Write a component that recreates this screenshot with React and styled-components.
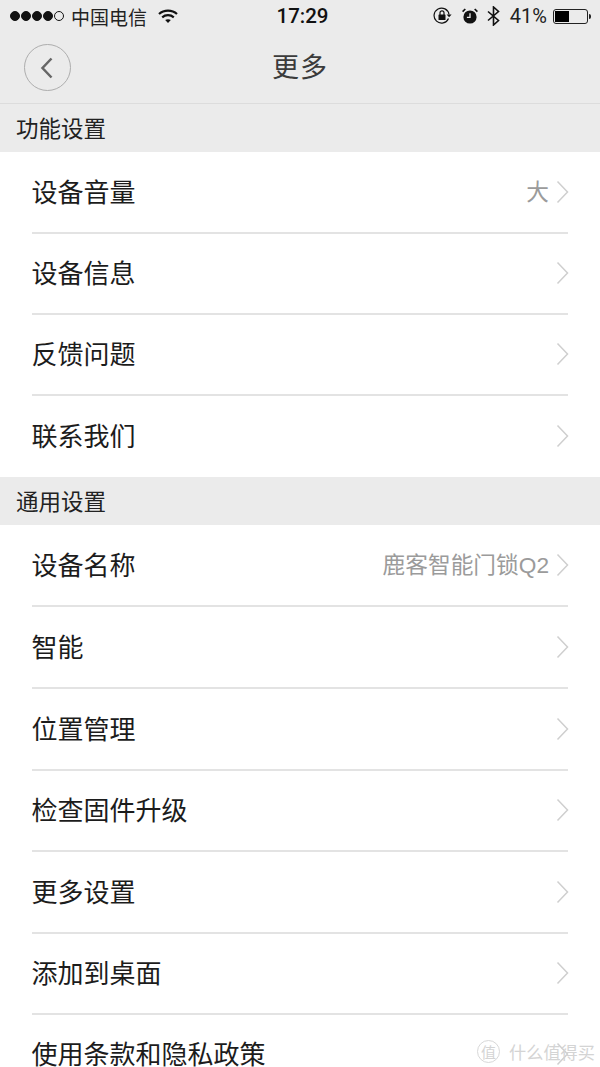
import React from "react";
import styled, { createGlobalStyle } from "styled-components";

const Global = createGlobalStyle`
  html, body { margin: 0; padding: 0; background: #fff; }
  body { font-family: "Liberation Sans", "Noto Sans CJK SC", sans-serif; }
`;
const Page = styled.div`
  position: relative; width: 600px; height: 1067px; overflow: hidden; background: #fff;
  font-family: "Liberation Sans", "Noto Sans CJK SC", sans-serif;
`;
const Header = styled.header`
  height: 103px; background: #ebebeb; border-bottom: 1px solid #dcdcdc; display: flex; flex-direction: column;
`;
const StatusBar = styled.div`
  height: 33px; padding: 0 9px 1px 10px; box-sizing: border-box; display: flex; align-items: center; justify-content: space-between;
  color: #111; font-size: 18px; position: relative;
`;
const StatusGroup = styled.div`
  display: flex; align-items: center; gap: ${p => p.$gap || 0}px;
`;
const Dots = styled.div`display: flex; gap: 1px; margin-right: 7px;`;
const Dot = styled.span`
  width: 10px; height: 10px; border-radius: 50%; box-sizing: border-box;
  background: ${p => (p.$empty ? "transparent" : "#111")};
  border: 1px solid #111;
`;
const Carrier = styled.span`font-size: 19px; margin-right: 11px; color: #222;`;
const Time = styled.span`
  position: absolute; left: 5px; right: 0; top: 4px; text-align: center; font-size: 20.5px; font-weight: 500; pointer-events: none;
  font-family: "Roboto", sans-serif;
`;
const Percent = styled.span`font-size: 20px; font-family: "Roboto", sans-serif; color: #222; margin: 0 -3px 0 1px;`;
const Battery = styled.div`
  position: relative; width: 35px; height: 15px; border: 1px solid #222; border-radius: 3px; box-sizing: border-box; padding: 1px;
  margin-right: 3px;
  &::after { content: ""; position: absolute; right: -4px; top: 4px; width: 2px; height: 5px; background: #222; border-radius: 0 2px 2px 0; }
`;
const BatteryFill = styled.div`height: 100%; background: #000;`;
const NavBar = styled.div`
  flex: 1; position: relative; display: flex; align-items: center; justify-content: center; padding-bottom: 6px;
`;
const BackButton = styled.button`
  position: absolute; left: 24px; top: 11px; width: 47px; height: 47px; border-radius: 50%; border: 1px solid #adadad;
  background: transparent; padding: 0 2px 0 0; display: flex; align-items: center; justify-content: center;
`;
const Title = styled.h1`
  margin: 0; font-size: 27px; font-weight: 400; color: #3b3b3b; letter-spacing: 1px;
`;
const SectionHead = styled.div`
  height: 48px; background: #ebebeb; display: flex; align-items: center; padding: 0 0 3px 16px;
  font-size: 22.5px; color: #222; box-sizing: border-box;
`;
const List = styled.div`display: flex; flex-direction: column;`;
const Row = styled.div`
  height: ${p => p.$h}px; margin: 0 32px; box-sizing: border-box; display: flex; align-items: center; justify-content: space-between;
  border-bottom: ${p => (p.$last ? "none" : "2px solid #e3e3e3")};
`;
const Label = styled.span`font-size: 26px; line-height: 26px; color: #1c1c1c; margin: 1px 0 0 -0.5px;`;
const Right = styled.div`display: flex; align-items: center; gap: 7px; margin: -1px -1px 0 0;`;
const Value = styled.span`font-size: 22.7px; color: #9b9b9b; margin-top: -3px;`;
const Watermark = styled.div`
  position: absolute; left: 477px; top: 1039px; display: flex; align-items: center; gap: 9px;
  color: #d4d4d4; font-size: 17.2px;
`;
const Seal = styled.span`
  width: 23px; height: 23px; border-radius: 50%; border: 1px solid #d8d8d8; box-sizing: border-box; display: flex; align-items: center; justify-content: center;
  font-size: 15px; background: #fff;
`;

const Chevron = () => (
  <svg width="13" height="24" viewBox="0 0 13 24" fill="none">
    <path d="M1.5 1.5 L11.5 12 L1.5 22.5" stroke="#cfcfcf" strokeWidth="1.5" />
  </svg>
);
const Wifi = () => (
  <svg width="20" height="15" viewBox="0 0 20 15" fill="none" stroke="#111" strokeWidth="2.2">
    <path d="M1 5 C6 0.5 14 0.5 19 5" />
    <path d="M4.2 8.3 C7.5 5.5 12.5 5.5 15.8 8.3" />
    <path d="M10 14 L7.2 11.1 C8.8 9.8 11.2 9.8 12.8 11.1 Z" fill="#111" stroke="none" />
  </svg>
);
const RotationLock = () => (
  <svg width="20" height="18" viewBox="0 0 20 18" fill="none">
    <path d="M15.5 11.5 A7.5 7.5 0 1 1 16 7.5" stroke="#111" strokeWidth="1.2" />
    <path d="M13.6 7.5 H18.6 L16.1 10.3 Z" fill="#111" />
    <rect x="5.5" y="7.5" width="7" height="5.5" rx="0.6" fill="#111" />
    <path d="M7 8 V5.8 A2 2 0 0 1 11 5.8 V8" stroke="#111" strokeWidth="1.2" />
  </svg>
);
const Alarm = () => (
  <svg width="16" height="16" viewBox="0 0 16 16" fill="none">
    <circle cx="8" cy="9" r="6.6" fill="#111" />
    <path d="M8 5.2 V9.4 H4.9" stroke="#ebebeb" strokeWidth="1.3" />
    <path d="M0.6 3.6 L3.3 1 M15.4 3.6 L12.7 1" stroke="#111" strokeWidth="1.7" />
  </svg>
);
const Bluetooth = () => (
  <svg width="13" height="20" viewBox="0 0 13 20" fill="none" stroke="#111" strokeWidth="1.6">
    <path d="M1 5.5 L11.5 14.5 L6.5 19 V1 L11.5 5.5 L1 14.5" />
  </svg>
);
const BackIcon = () => (
  <svg width="13" height="22" viewBox="0 0 13 22" fill="none">
    <path d="M11.5 1.5 L2.5 11 L11.5 20.5" stroke="#666" strokeWidth="2.5" />
  </svg>
);

const groupA = [
  { t: "设备音量", v: "大", h: 82 },
  { t: "设备信息", h: 81 },
  { t: "反馈问题", h: 81 },
  { t: "联系我们", h: 81, last: true },
];
const groupB = [
  { t: "设备名称", v: "鹿客智能门锁Q2", h: 82 },
  { t: "智能", h: 82 },
  { t: "位置管理", h: 82 },
  { t: "检查固件升级", h: 81 },
  { t: "更多设置", h: 82 },
  { t: "添加到桌面", h: 81 },
  { t: "使用条款和隐私政策", h: 79, last: true },
];

const Rows = ({ items }) => (
  <List>
    {items.map(r => (
      <Row key={r.t} $h={r.h} $last={r.last}>
        <Label>{r.t}</Label>
        <Right>
          {r.v && <Value>{r.v}</Value>}
          <Chevron />
        </Right>
      </Row>
    ))}
  </List>
);

export default function App() {
  return (
    <Page>
      <Global />
      <Header>
        <StatusBar>
          <StatusGroup>
            <Dots>
              <Dot /><Dot /><Dot /><Dot /><Dot $empty />
            </Dots>
            <Carrier>中国电信</Carrier>
            <Wifi />
          </StatusGroup>
          <Time>17:29</Time>
          <StatusGroup $gap={9}>
            <RotationLock />
            <Alarm />
            <Bluetooth />
            <Percent>41%</Percent>
            <Battery><BatteryFill style={{ width: "45%" }} /></Battery>
          </StatusGroup>
        </StatusBar>
        <NavBar>
          <BackButton aria-label="返回"><BackIcon /></BackButton>
          <Title>更多</Title>
        </NavBar>
      </Header>
      <SectionHead>功能设置</SectionHead>
      <Rows items={groupA} />
      <SectionHead>通用设置</SectionHead>
      <Rows items={groupB} />
      <Watermark>
        <Seal>值</Seal>
        <span>什么值得买</span>
      </Watermark>
    </Page>
  );
}
